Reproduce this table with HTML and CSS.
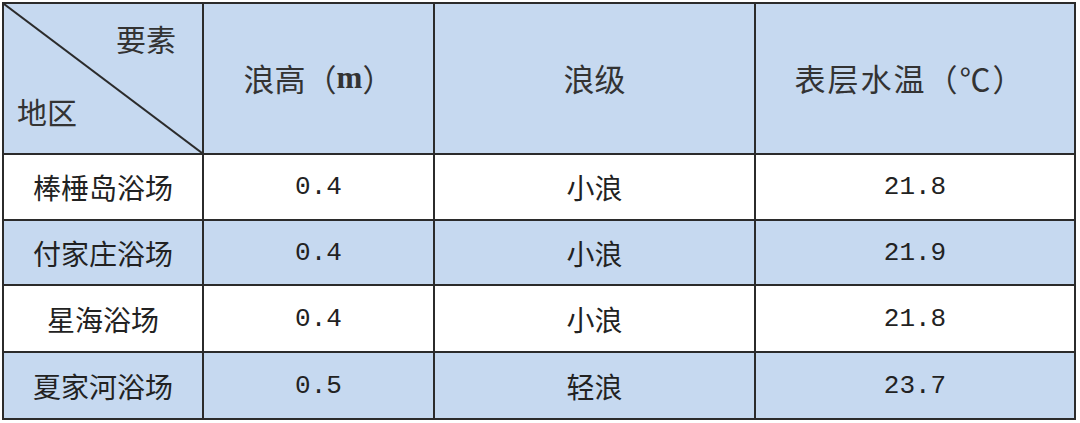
FILE: index.html
```html
<!DOCTYPE html>
<html lang="zh-CN">
<head>
<meta charset="utf-8">
<title>浴场海况</title>
<link rel="stylesheet" href="styles.css">
</head>
<body>
<div class="sheet">
  <div class="cell head corner">
    <svg class="diag" viewBox="0 0 198 149" preserveAspectRatio="none"><line x1="0" y1="0" x2="198" y2="149" stroke="#2b2b2b" stroke-width="2"/></svg>
    <span class="c-top">要素</span>
    <span class="c-bot">地区</span>
  </div>
  <div class="cell head">浪高（<b class="m">m</b>）</div>
  <div class="cell head">浪级</div>
  <div class="cell head wide">表层水温（℃）</div>

  <div class="cell name">棒棰岛浴场</div>
  <div class="cell num">0.4</div>
  <div class="cell name">小浪</div>
  <div class="cell num">21.8</div>

  <div class="cell name blue">付家庄浴场</div>
  <div class="cell num blue">0.4</div>
  <div class="cell name blue">小浪</div>
  <div class="cell num blue">21.9</div>

  <div class="cell name">星海浴场</div>
  <div class="cell num">0.4</div>
  <div class="cell name">小浪</div>
  <div class="cell num">21.8</div>

  <div class="cell name blue">夏家河浴场</div>
  <div class="cell num blue">0.5</div>
  <div class="cell name blue">轻浪</div>
  <div class="cell num blue">23.7</div>
</div>
</body>
</html>
```
FILE: styles.css
```css
html, body {
  margin: 0;
  padding: 0;
  background: #ffffff;
}
body {
  padding: 2px 0 0 2px;
  font-family: "Noto Sans CJK SC", "Noto Sans", sans-serif;
  color: #262626;
}
.sheet {
  display: grid;
  grid-template-columns: 200px 231px 321px 320px;
  grid-template-rows: 151px 66px 65px 67px 67px;
  width: 1074px;
  box-sizing: border-box;
  border-left: 2px solid #2b2b2b;
  border-top: 2px solid #2b2b2b;
}
.cell {
  box-sizing: border-box;
  border-right: 2px solid #2b2b2b;
  border-bottom: 2px solid #2b2b2b;
  display: flex;
  align-items: center;
  justify-content: center;
  background: #ffffff;
}
.head {
  background: #c6d9f0;
  font-size: 31px;
  color: #333333;
  padding-bottom: 2px;
}
.wide {
  letter-spacing: 2px;
  padding-right: 10px;
}
.blue {
  background: #c6d9f0;
}
.m {
  font-family: "Liberation Serif", serif;
  font-weight: bold;
  font-size: 31px;
}
.corner {
  position: relative;
  display: block;
  font-size: 30px;
}
.diag {
  position: absolute;
  left: 0;
  top: 0;
  width: 198px;
  height: 149px;
}
.c-top {
  position: absolute;
  right: 26px;
  top: 16px;
  line-height: 1.2;
}
.c-bot {
  position: absolute;
  left: 13px;
  top: 89px;
  line-height: 1.2;
}
.name {
  font-size: 28px;
  color: #222222;
}
.num {
  font-family: "Liberation Mono", monospace;
  font-size: 26px;
  color: #222222;
}
```
